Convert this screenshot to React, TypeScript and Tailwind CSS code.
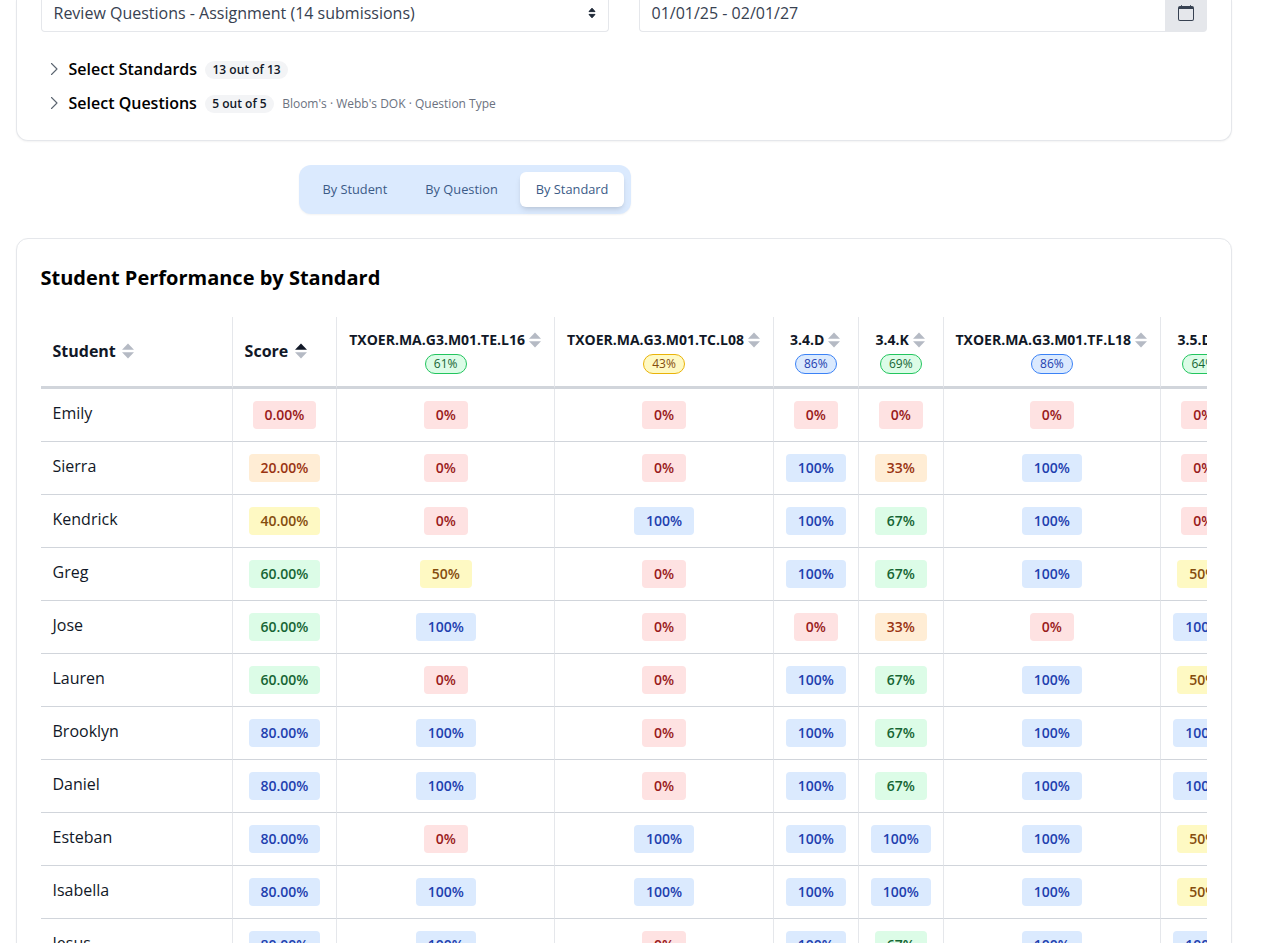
import React from "react";

const tones = {
  red: "bg-[#fee2e2] text-[#991b1b]",
  orange: "bg-[#ffedd5] text-[#9a3412]",
  yellow: "bg-[#fef9c3] text-[#854d0e]",
  green: "bg-[#dcfce7] text-[#166534]",
  blue: "bg-[#dbeafe] text-[#1e40af]",
};
type Tone = keyof typeof tones;

const pillBorders: Record<Tone, string> = {
  red: "border-[#ef4444]",
  orange: "border-[#f97316]",
  yellow: "border-[#eab308]",
  green: "border-[#22c55e]",
  blue: "border-[#3b82f6]",
};

function toneFor(value: number): Tone {
  if (value >= 80) return "blue";
  if (value >= 60) return "green";
  if (value >= 40) return "yellow";
  if (value >= 20) return "orange";
  return "red";
}

const standards = [
  { code: "TXOER.MA.G3.M01.TE.L16", average: 61 },
  { code: "TXOER.MA.G3.M01.TC.L08", average: 43 },
  { code: "3.4.D", average: 86 },
  { code: "3.4.K", average: 69 },
  { code: "TXOER.MA.G3.M01.TF.L18", average: 86 },
  { code: "3.5.D", average: 64 },
];

const students: { name: string; score: number; results: number[] }[] = [
  { name: "Emily", score: 0, results: [0, 0, 0, 0, 0, 0] },
  { name: "Sierra", score: 20, results: [0, 0, 100, 33, 100, 0] },
  { name: "Kendrick", score: 40, results: [0, 100, 100, 67, 100, 0] },
  { name: "Greg", score: 60, results: [50, 0, 100, 67, 100, 50] },
  { name: "Jose", score: 60, results: [100, 0, 0, 33, 0, 100] },
  { name: "Lauren", score: 60, results: [0, 0, 100, 67, 100, 50] },
  { name: "Brooklyn", score: 80, results: [100, 0, 100, 67, 100, 100] },
  { name: "Daniel", score: 80, results: [100, 0, 100, 67, 100, 100] },
  { name: "Esteban", score: 80, results: [0, 100, 100, 100, 100, 50] },
  { name: "Isabella", score: 80, results: [100, 100, 100, 100, 100, 50] },
  { name: "Jesus", score: 80, results: [100, 0, 100, 67, 100, 100] },
];

const columns = "grid grid-cols-[192px_104px_218.4px_218.4px_85px_85px_217.2px_85.6px] w-[1205.6px]";

function SortIcon({ ascending = false }: { ascending?: boolean }) {
  return (
    <svg width="12" height="16" viewBox="0 0 12 16" className="mt-px shrink-0">
      <path d="M6 0.6 L12 6.8 H0 Z" fill={ascending ? "#111827" : "#b5bac4"} />
      <path d="M6 15.4 L0 9.2 H12 Z" fill="#b5bac4" />
    </svg>
  );
}

function Badge({ value, label }: { value: number; label: string }) {
  return (
    <span className={`h-7 rounded px-3 text-sm leading-7 font-semibold ${tones[toneFor(value)]}`}>
      {label}
    </span>
  );
}

function Pill({ value }: { value: number }) {
  const tone = toneFor(value);
  return (
    <span className={`h-5 rounded-full border px-2 text-xs leading-[18px] font-medium ${tones[tone]} ${pillBorders[tone]}`}>
      {value}%
    </span>
  );
}

function Disclosure({ title, count, note }: { title: string; count: string; note?: string }) {
  return (
    <div className="flex h-[34px] items-center">
      <svg width="16" height="16" viewBox="0 0 16 16" className="ml-[5px] mr-[6.5px]" fill="none" stroke="#5b6470" strokeWidth="1.1" strokeLinecap="round" strokeLinejoin="round">
        <path d="M5.5 2.5 L11 8 L5.5 13.5" />
      </svg>
      <span className="text-base font-semibold text-black">{title}</span>
      <span className="ml-2 mt-0.5 h-[18px] rounded-full bg-[#f3f4f6] px-[7.4px] text-xs leading-[18px] font-semibold text-[#111827]">
        {count}
      </span>
      {note && <span className="ml-2 mt-0.5 text-xs text-[#6b7280]">{note}</span>}
    </div>
  );
}

function Filters() {
  return (
    <section className="h-[141px] w-[1216px] rounded-b-xl border border-t-0 border-[#e5e7eb] bg-white px-6 shadow-xs">
      <div className="flex h-8 gap-[30px] text-base text-[#374151]">
        <div className="flex w-[568px] items-start justify-between rounded-b border border-t-0 border-[#e5e7eb] pr-3 pl-[11.5px]">
          <span className="mt-px">Review Questions - Assignment (14 submissions)</span>
          <svg width="8" height="12" viewBox="0 0 8 12" className="mt-[7px]" fill="#1f2937">
            <path d="M4 1.2 L7 4.6 H1 Z M4 10.8 L1 7.4 H7 Z" stroke="#1f2937" strokeWidth="1" strokeLinejoin="round" />
          </svg>
        </div>
        <div className="flex w-[568px]">
          <div className="grow rounded-bl border border-t-0 border-r-0 border-[#e5e7eb] pl-[11.5px]">
            <span className="mt-px block">01/01/25 - 02/01/27</span>
          </div>
          <div className="flex w-[42px] items-start justify-center rounded-br bg-[#e5e7eb]">
            <svg width="16" height="16" viewBox="0 0 16 16" fill="#374151" className="mt-[5px]">
              <path d="M3.5 0a.5.5 0 0 1 .5.5V1h8V.5a.5.5 0 0 1 1 0V1h1a2 2 0 0 1 2 2v11a2 2 0 0 1-2 2H2a2 2 0 0 1-2-2V3a2 2 0 0 1 2-2h1V.5a.5.5 0 0 1 .5-.5M1 4v10a1 1 0 0 0 1 1h12a1 1 0 0 0 1-1V4z" />
            </svg>
          </div>
        </div>
      </div>
      <div className="pt-5">
        <Disclosure title="Select Standards" count="13 out of 13" />
        <Disclosure title="Select Questions" count="5 out of 5" note="Bloom's · Webb's DOK · Question Type" />
      </div>
    </section>
  );
}

function ViewTabs() {
  const tab = "h-[35px] rounded-md px-[15.6px] text-[12.8px] leading-[35px] text-[#3b5b87]";
  return (
    <nav className="mt-6 ml-[283px] flex h-[49px] w-[332px] items-center justify-between rounded-xl bg-[#dbeafe] pr-[7px] pl-[7.8px] shadow-xs">
      <button className={tab}>By Student</button>
      <button className={tab}>By Question</button>
      <button className={`${tab} bg-white shadow-md`}>By Standard</button>
    </nav>
  );
}

function PerformanceTable() {
  return (
    <div className="mt-6 overflow-hidden">
      <div className={`${columns} h-[72px] text-[#111827]`}>
        <div className="flex items-center gap-1.5 border-r border-b-3 border-r-[#e5e7eb] border-b-[#d1d5db] pb-0.5 pl-[11.5px] font-bold">
          Student <SortIcon />
        </div>
        <div className="flex items-center gap-[7px] border-r border-b-3 border-r-[#e5e7eb] border-b-[#d1d5db] pb-0.5 pl-[11.6px] font-bold">
          Score <SortIcon ascending />
        </div>
        {standards.map((s) => (
          <div key={s.code} className="flex flex-col items-center border-r border-b-3 border-r-[#e5e7eb] border-b-[#d1d5db] pt-3">
            <div className="flex h-5 items-center gap-1 pr-[1.2px] text-sm font-bold whitespace-nowrap">
              <span className="pt-0.5">{s.code}</span> <SortIcon />
            </div>
            <div className="mt-[5px] flex">
              <Pill value={s.average} />
            </div>
          </div>
        ))}
      </div>
      {students.map((student) => (
        <div key={student.name} className={`${columns} h-[53px]`}>
          <div className="border-r border-b border-r-[#e5e7eb] border-b-[#d1d5db] pt-3 pl-[11.5px] text-base text-[#111827]">
            {student.name}
          </div>
          <div className="flex items-start justify-center border-r border-b border-r-[#e5e7eb] border-b-[#d1d5db] pt-3">
            <Badge value={student.score} label={`${student.score.toFixed(2)}%`} />
          </div>
          {student.results.map((r, i) => (
            <div key={i} className="flex items-start justify-center border-r border-b border-r-[#e5e7eb] border-b-[#d1d5db] pt-3">
              <Badge value={r} label={`${r}%`} />
            </div>
          ))}
        </div>
      ))}
    </div>
  );
}

export default function App() {
  return (
    <main className="h-[943px] overflow-hidden bg-white px-4 font-['Open_Sans','Noto_Sans',sans-serif]">
      <Filters />
      <ViewTabs />
      <section className="mt-6 w-[1216px] rounded-t-xl border border-[#e5e7eb] bg-white p-6 shadow-xs">
        <h2 className="-ml-[0.5px] text-xl leading-[30px] font-bold text-black">Student Performance by Standard</h2>
        <PerformanceTable />
      </section>
    </main>
  );
}
